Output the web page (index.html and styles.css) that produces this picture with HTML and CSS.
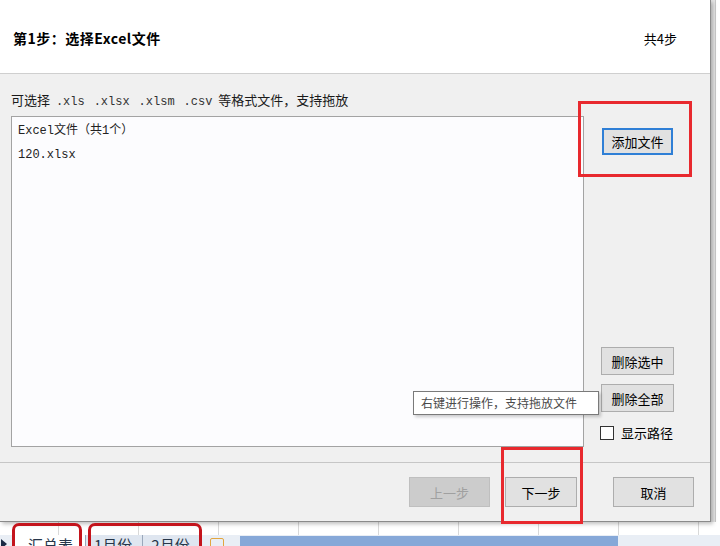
FILE: index.html
```html
<!DOCTYPE html>
<html lang="zh-CN">
<head>
    <meta charset="UTF-8">
    <title>选择Excel文件</title>
    <link rel="stylesheet" href="styles.css">
</head>
<body>
    <div class="desk">
        <div class="dialog">
            <header class="dlg-head">
                <h1 class="step-title">第1步：选择Excel文件</h1>
                <span class="step-count">共4步</span>
            </header>
            <section class="dlg-body">
                <div class="file-pane">
                    <p class="hint">可选择 <span class="ext">.xls</span> <span class="ext">.xlsx</span> <span class="ext">.xlsm</span> <span class="ext">.csv</span> 等格式文件，支持拖放</p>
                    <div class="file-list">
                        <div class="file-row">Excel文件（共1个）</div>
                        <div class="file-row">120.xlsx</div>
                    </div>
                </div>
                <div class="side-actions">
                    <button class="btn btn-focus">添加文件</button>
                    <div class="side-bottom">
                        <button class="btn">删除选中</button>
                        <button class="btn">删除全部</button>
                        <label class="check"><span class="check-box"></span>显示路径</label>
                    </div>
                </div>
            </section>
            <footer class="dlg-foot">
                <button class="btn btn-step" disabled>上一步</button>
                <button class="btn btn-step btn-next">下一步</button>
                <button class="btn btn-step btn-cancel">取消</button>
            </footer>
        </div>
        <div class="sheet-edge"></div>
        <div class="sheet-bottom">
            <div class="grid-row"></div>
            <div class="tab-bar">
                <span class="tab-nav"></span>
                <span class="tab tab-active">汇总表</span>
                <span class="tab">1月份</span>
                <span class="tab">2月份</span>
                <span class="tab-new"></span>
                <span class="tab-scroll"></span>
            </div>
        </div>

        <div class="tooltip">右键进行操作，支持拖放文件</div>
        <div class="mark mark-add"></div>
        <div class="mark mark-next"></div>
        <div class="mark mark-tab mark-tab1"></div>
        <div class="mark mark-tab mark-tab2"></div>
    </div>
</body>
</html>
```

FILE: styles.css
```css
body {
    margin: 0;
    background: #fff;
    font-family: "Noto Sans CJK SC", "Noto Sans", sans-serif;
    color: #000;
}
.desk {
    position: relative;
    width: 720px;
    height: 546px;
    overflow: hidden;
    display: grid;
    grid-template-columns: 711px 9px;
    grid-template-rows: 522px 24px;
}
.dialog {
    display: flex;
    flex-direction: column;
    background: #f0f0f0;
    border-right: 1px solid #8a8a8a;
    border-bottom: 1px solid #8a8a8a;
    box-shadow: 2px 2px 4px rgba(0, 0, 0, 0.25);
    z-index: 1;
}
.dlg-head {
    flex: none;
    height: 74px;
    box-sizing: border-box;
    background: #fff;
    border-bottom: 1px solid #cfcfcf;
    display: flex;
    align-items: center;
    justify-content: space-between;
    padding: 3px 33px 0 13px;
}
.step-title {
    margin: 0;
    font-size: 14px;
    font-weight: bold;
    letter-spacing: 0.5px;
}
.step-count {
    font-size: 13px;
}
.dlg-body {
    flex: 1;
    display: flex;
    padding: 0 36px 15px 11px;
}
.file-pane {
    width: 573px;
    display: flex;
    flex-direction: column;
}
.hint {
    margin: 17px 0 5px;
    font-size: 13px;
    line-height: 17px;
    color: #1a1a1a;
    white-space: pre;
}
.ext {
    font-family: "Liberation Mono", monospace;
    font-size: 12px;
    color: #333;
    padding: 0 3px;
}
.file-list {
    flex: 1;
    background: #fcfcfe;
    border: 1px solid #a3a3a3;
    padding: 2px 6px;
    font-family: "Liberation Mono", "Noto Sans CJK SC", monospace;
    font-size: 12px;
    color: #222;
}
.file-row {
    line-height: 24px;
}
.side-actions {
    margin-left: 17px;
    width: 73px;
    display: flex;
    flex-direction: column;
    justify-content: space-between;
}
.side-bottom {
    display: flex;
    flex-direction: column;
    gap: 9px;
    padding-bottom: 5px;
}
.btn {
    font-family: "Noto Sans CJK SC", sans-serif;
    font-size: 13px;
    color: #000;
    background: #e1e1e1;
    border: 1px solid #adadad;
    height: 28px;
    padding: 0;
}
.btn-focus {
    margin-top: 54px;
    margin-left: 1px;
    width: 71px;
    height: 27px;
    border: 2px solid #2f7fd6;
}
.check {
    display: flex;
    align-items: center;
    margin: 2px 0 0 -1px;
    font-size: 13px;
    line-height: 19px;
    gap: 7px;
}
.check-box {
    width: 12px;
    height: 12px;
    border: 1px solid #333;
    background: #fff;
}
.dlg-foot {
    height: 58px;
    flex: none;
    border-top: 1px solid #c6c6c6;
    display: flex;
    align-items: center;
    padding-left: 409px;
}
.btn-step {
    width: 81px;
    height: 30px;
}
.btn-step:disabled {
    background: #cccccc;
    border-color: #bfbfbf;
    color: #a0a0a0;
}
.btn-next {
    width: 72px;
    margin-left: 15px;
}
.btn-cancel {
    margin-left: 36px;
}
.sheet-edge {
    background: repeating-linear-gradient(to bottom, #fff 0, #fff 19px, #d6d6d6 19px, #d6d6d6 20px);
    border-left: 4px solid #e6e6e6;
    box-shadow: inset -4px 0 0 #fff, inset -5px 0 0 #c8c8c8;
}
.sheet-bottom {
    grid-column: 1 / span 2;
    display: flex;
    flex-direction: column;
    background: #fff;
}
.grid-row {
    height: 13px;
    flex: none;
    background: linear-gradient(to right, #d9d9d9 0, #d9d9d9 1px, transparent 1px);
    background-size: 80px 100%;
    background-position: 58px 0;
}
.tab-bar {
    flex: 1;
    display: flex;
    align-items: flex-start;
    background: #e9eef5;
    font-size: 15px;
    color: #27364a;
    overflow: hidden;
}
.tab-nav {
    width: 0;
    height: 0;
    margin: 4px 0 0 1px;
    border-left: 6px solid #1a2a44;
    border-top: 5px solid transparent;
    border-bottom: 5px solid transparent;
}
.tab {
    padding: 1px 10px 0 8px;
    line-height: 18px;
    border-left: 1px solid #9aa8bb;
    background: #dfe6f0;
}
.tab-active {
    margin-left: 6px;
    padding: 1px 12px 0 14px;
    background: #fff;
}
.tab-new {
    width: 12px;
    height: 10px;
    margin: 3px 0 0 10px;
    border: 1px solid #e2a640;
    border-radius: 2px;
}
.tab-scroll {
    margin: 1px 0 0 16px;
    width: 378px;
    height: 14px;
    background: #86a8d8;
}
.tooltip {
    position: absolute;
    left: 413px;
    top: 391px;
    width: 186px;
    height: 24px;
    box-sizing: border-box;
    background: #fff;
    border: 1px solid #7a7a7a;
    box-shadow: 2px 2px 3px rgba(0, 0, 0, 0.2);
    font-size: 12px;
    line-height: 22px;
    padding-left: 7px;
    color: #4a4a4a;
    z-index: 2;
}
.mark {
    position: absolute;
    box-sizing: border-box;
    border: 3px solid #e8292e;
    z-index: 3;
}
.mark-add {
    left: 578px;
    top: 101px;
    width: 114px;
    height: 76px;
}
.mark-next {
    left: 501px;
    top: 447px;
    width: 82px;
    height: 77px;
}
.mark-tab {
    top: 523px;
    height: 34px;
    border-color: #c4141c;
    border-radius: 7px 7px 0 0;
}
.mark-tab1 {
    left: 12px;
    width: 70px;
}
.mark-tab2 {
    left: 88px;
    width: 114px;
}
```
